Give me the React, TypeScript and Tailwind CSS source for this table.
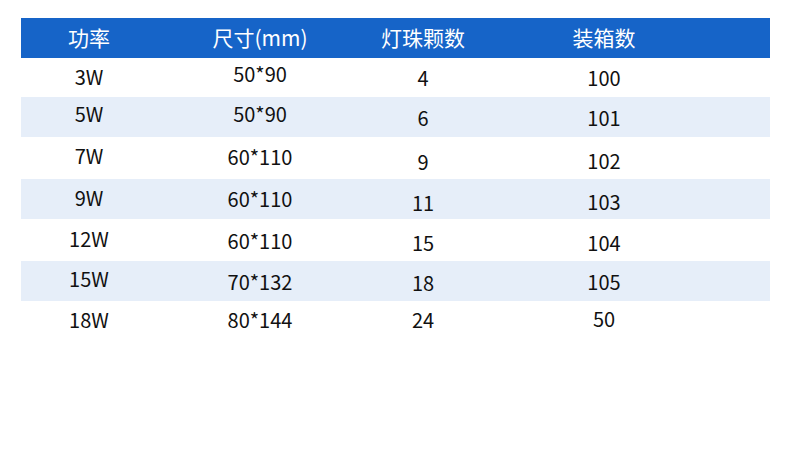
const rows = [
  { h: 'h-[39px]', bg: 'bg-white', cells: [
    ['3W', 'pb-[2px]'], ['50*90', 'pb-[8px]'], ['4', 'pt-[0px]'], ['100', 'pt-[0px]'],
  ] },
  { h: 'h-[40px]', bg: 'bg-[#e6eef9]', cells: [
    ['5W', 'pb-[7px]'], ['50*90', 'pb-[7px]'], ['6', 'pt-[1px]'], ['101', 'pt-[1px]'],
  ] },
  { h: 'h-[42px]', bg: 'bg-white', cells: [
    ['7W', 'pb-[4px]'], ['60*110', 'pb-[2px]'], ['9', 'pt-[8px]'], ['102', 'pt-[5px]'],
  ] },
  { h: 'h-[40px]', bg: 'bg-[#e6eef9]', cells: [
    ['9W', 'pb-[2px]'], ['60*110', 'pt-[0px]'], ['11', 'pt-[8px]'], ['103', 'pt-[5px]'],
  ] },
  { h: 'h-[42px]', bg: 'bg-white', cells: [
    ['12W', 'pb-[2px]'], ['60*110', 'pt-[1px]'], ['15', 'pt-[6px]'], ['104', 'pt-[6px]'],
  ] },
  { h: 'h-[40px]', bg: 'bg-[#e6eef9]', cells: [
    ['15W', 'pb-[4px]'], ['70*132', 'pt-[1px]'], ['18', 'pt-[3px]'], ['105', 'pt-[1px]'],
  ] },
  { h: 'h-[40px]', bg: 'bg-white', cells: [
    ['18W', 'pb-[2px]'], ['80*144', 'pb-[2px]'], ['24', 'pb-[2px]'], ['50', 'pb-[4px]'],
  ] },
]

const cols = 'grid grid-cols-[136px_206px_120px_242px_1fr]'

export default function App() {
  return (
    <div
      className="w-[790px] h-[472px] bg-white pt-[18px] px-[20px]"
      style={{ fontFamily: '"Noto Sans CJK SC", "Noto Sans", sans-serif' }}
    >
      <div className="w-[749px] ml-[1px]">
        <div className={`${cols} h-[40px] bg-[#1664c8] text-white text-[21px]`}>
          <div className="flex items-center justify-center">功率</div>
          <div className="flex items-center justify-center">尺寸(mm)</div>
          <div className="flex items-center justify-center">灯珠颗数</div>
          <div className="flex items-center justify-center">装箱数</div>
          <div />
        </div>
        {rows.map((r, i) => (
          <div key={i} className={`${cols} ${r.h} ${r.bg} text-[20px] text-[#111]`}>
            {r.cells.map(([t, pad], j) => (
              <div key={j} className={`flex items-center justify-center leading-none ${pad}`}>
                {t}
              </div>
            ))}
            <div />
          </div>
        ))}
      </div>
    </div>
  )
}
